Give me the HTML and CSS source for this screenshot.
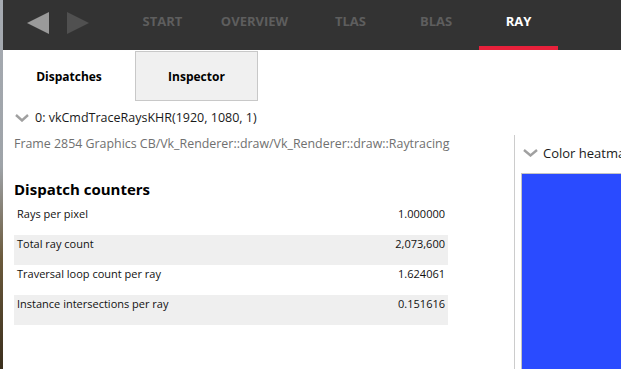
FILE: index.html
```html
<!DOCTYPE html>
<html lang="en">
<head>
    <meta charset="UTF-8">
    <title>RAY - Dispatches</title>
    <link rel="stylesheet" href="styles.css">
</head>
<body>
    <div class="edge"></div>
    <div class="app">
        <div class="topbar">
            <div class="nav-arrows">
                <svg width="22" height="22" viewBox="0 0 22 22"><polygon points="22,0 22,22 0,11" fill="#9a9a9a"/></svg>
                <svg width="22" height="22" viewBox="0 0 22 22"><polygon points="0,0 0,22 22,11" fill="#505050"/></svg>
            </div>
            <div class="nav-tab tab-start">START</div>
            <div class="nav-tab tab-overview">OVERVIEW</div>
            <div class="nav-tab tab-tlas">TLAS</div>
            <div class="nav-tab tab-blas">BLAS</div>
            <div class="nav-tab tab-ray active">RAY</div>
        </div>

        <div class="subtabs">
            <div class="subtab active">Dispatches</div>
            <div class="subtab">Inspector</div>
        </div>

        <div class="call-header">
            <svg class="chevron" width="14" height="8" viewBox="0 0 14 8"><polyline points="1,1 7,6.5 13,1" fill="none" stroke="#a0a0a0" stroke-width="2.4"/></svg>
            <span>0: vkCmdTraceRaysKHR(1920, 1080, 1)</span>
        </div>

        <div class="split">
            <div class="left-panel">
                <div class="frame-path">Frame 2854 Graphics CB/Vk_Renderer::draw/Vk_Renderer::draw::Raytracing</div>
                <h2 class="section-title">Dispatch counters</h2>
                <div class="counters">
                    <div class="counter-row">
                        <span>Rays per pixel</span>
                        <span>1.000000</span>
                    </div>
                    <div class="counter-row">
                        <span>Total ray count</span>
                        <span>2,073,600</span>
                    </div>
                    <div class="counter-row">
                        <span>Traversal loop count per ray</span>
                        <span>1.624061</span>
                    </div>
                    <div class="counter-row">
                        <span>Instance intersections per ray</span>
                        <span>0.151616</span>
                    </div>
                </div>
            </div>
            <div class="right-panel">
                <div class="heatmap-header">
                    <svg class="chevron" width="15" height="8" viewBox="0 0 15 8"><polyline points="1,1 7.5,6.5 14,1" fill="none" stroke="#a0a0a0" stroke-width="2.4"/></svg>
                    <span>Color heatmap</span>
                </div>
                <div class="heatmap"></div>
            </div>
        </div>
    </div>
</body>
</html>
```

FILE: styles.css
```css
html, body {
    height: 100%;
}
body {
    margin: 0;
    display: flex;
    overflow: hidden;
    font-family: 'Open Sans', 'Noto Sans', sans-serif;
    color: #111;
    background-color: #fff;
}
.edge {
    width: 3px;
    flex-shrink: 0;
    background: linear-gradient(180deg, #a6abb2 0%, #9ea3a8 45%, #6b5a3c 70%, #3a2e1c 100%);
}
.app {
    flex: 1;
    display: flex;
    flex-direction: column;
    min-width: 0;
}
.topbar {
    height: 50px;
    flex-shrink: 0;
    background-color: #333333;
    display: flex;
}
.nav-arrows {
    width: 97px;
    padding-left: 24px;
    display: flex;
    align-items: center;
    gap: 18px;
    padding-bottom: 4px;
}
.nav-tab {
    display: flex;
    align-items: center;
    justify-content: center;
    padding-bottom: 4px;
    font-size: 13px;
    font-weight: 700;
    color: #5e5e5e;
    border-bottom: 4px solid transparent;
    box-sizing: border-box;
}
.tab-start { width: 77px; }
.tab-overview { width: 107px; }
.tab-tlas { width: 85px; }
.tab-blas { width: 86px; }
.tab-ray { width: 79px; }
.nav-tab.active {
    color: #fff;
    border-bottom-color: #e8213b;
}
.subtabs {
    height: 51px;
    flex-shrink: 0;
    display: flex;
}
.subtab {
    display: flex;
    align-items: center;
    justify-content: center;
    font-size: 12px;
    font-weight: 700;
    color: #000;
    width: 123px;
    margin-top: 1px;
    background-color: #f0f0f0;
    border: 1px solid #c8c8c8;
    box-sizing: border-box;
}
.subtab.active {
    width: 132px;
    margin-top: 0;
    background-color: #fff;
    border-color: transparent;
    padding-top: 2px;
}
.call-header {
    height: 34px;
    flex-shrink: 0;
    display: flex;
    align-items: center;
    padding-left: 12px;
    padding-bottom: 1px;
    box-sizing: border-box;
    font-size: 12.5px;
    color: #1a1a1a;
}
.chevron {
    flex-shrink: 0;
    margin-right: 6px;
}
.split {
    flex: 1;
    display: flex;
    min-height: 0;
}
.left-panel {
    width: 500px;
    flex-shrink: 0;
    padding-left: 11px;
    border-right: 1px solid #cccccc;
}
.frame-path {
    font-size: 12.4px;
    line-height: 18px;
    color: #707070;
    white-space: nowrap;
}
.section-title {
    margin: 25px 0 5px;
    font-size: 15px;
    line-height: 22px;
    font-weight: 700;
    color: #000;
}
.counters {
    width: 434px;
}
.counter-row {
    height: 30px;
    display: flex;
    justify-content: space-between;
    padding: 1px 3px 0 3px;
    box-sizing: border-box;
    font-size: 11px;
    line-height: 16px;
    color: #111;
}
.counter-row:nth-child(even) {
    background-color: #efefef;
}
.right-panel {
    flex: 1;
    padding-left: 6px;
    min-width: 0;
    overflow: hidden;
}
.heatmap-header {
    margin-top: 8px;
    height: 20px;
    display: flex;
    align-items: center;
    padding-left: 2px;
    font-size: 13px;
    color: #1a1a1a;
    white-space: nowrap;
}
.heatmap-header .chevron {
    margin-right: 5px;
}
.heatmap {
    margin-top: 10px;
    height: 300px;
    background-color: #2a4bff;
    border-top: 1px solid #c4c4c4;
    border-left: 1px solid #c4c4c4;
}
```
